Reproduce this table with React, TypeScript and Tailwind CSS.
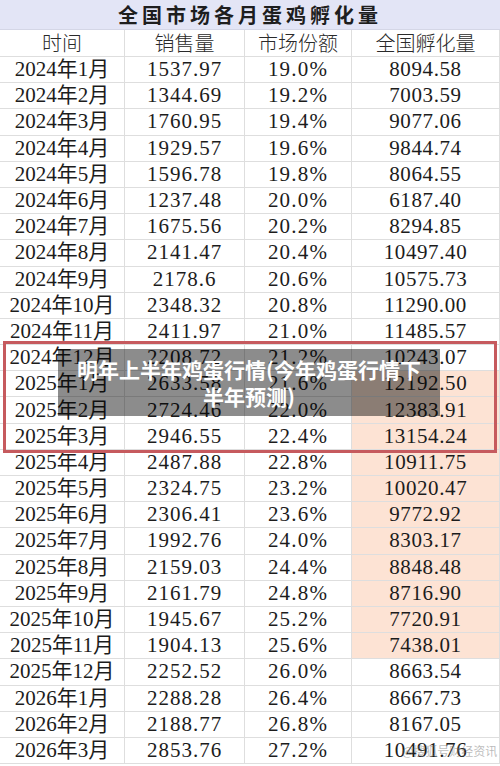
import React from "react";

const rows: [string, string, string, string][] = [
  ["2024年1月", "1537.97", "19.0%", "8094.58"],
  ["2024年2月", "1344.69", "19.2%", "7003.59"],
  ["2024年3月", "1760.95", "19.4%", "9077.06"],
  ["2024年4月", "1929.57", "19.6%", "9844.74"],
  ["2024年5月", "1596.78", "19.8%", "8064.55"],
  ["2024年6月", "1237.48", "20.0%", "6187.40"],
  ["2024年7月", "1675.56", "20.2%", "8294.85"],
  ["2024年8月", "2141.47", "20.4%", "10497.40"],
  ["2024年9月", "2178.6", "20.6%", "10575.73"],
  ["2024年10月", "2348.32", "20.8%", "11290.00"],
  ["2024年11月", "2411.97", "21.0%", "11485.57"],
  ["2024年12月", "2208.72", "21.2%", "10243.07"],
  ["2025年1月", "2633.58", "21.6%", "12192.50"],
  ["2025年2月", "2724.46", "22.0%", "12383.91"],
  ["2025年3月", "2946.55", "22.4%", "13154.24"],
  ["2025年4月", "2487.88", "22.8%", "10911.75"],
  ["2025年5月", "2324.75", "23.2%", "10020.47"],
  ["2025年6月", "2306.41", "23.6%", "9772.92"],
  ["2025年7月", "1992.76", "24.0%", "8303.17"],
  ["2025年8月", "2159.03", "24.4%", "8848.48"],
  ["2025年9月", "2161.79", "24.8%", "8716.90"],
  ["2025年10月", "1945.67", "25.2%", "7720.91"],
  ["2025年11月", "1904.13", "25.6%", "7438.01"],
  ["2025年12月", "2252.52", "26.0%", "8663.54"],
  ["2026年1月", "2288.28", "26.4%", "8667.73"],
  ["2026年2月", "2188.77", "26.8%", "8167.05"],
  ["2026年3月", "2853.76", "27.2%", "10491.76"],
];

const cell =
  "flex h-[26.2px] items-center justify-center border-b border-r border-[#dedede] text-[21px] leading-none text-[#1c1c1c]";

export default function App() {
  return (
    <div
      className="relative w-[500px] h-[766px] overflow-hidden bg-white"
      style={{ fontFamily: '"Liberation Serif", "Noto Sans CJK SC", serif' }}
    >
      <div className="flex h-[30px] items-center justify-center bg-[#e3e5f6] border-b border-[#d4d6e6]">
        <span
          className="text-[20px] font-bold tracking-[4px] text-[#1e1e1e]"
          style={{ fontFamily: '"Noto Sans CJK SC", sans-serif' }}
        >
          全国市场各月蛋鸡孵化量
        </span>
      </div>
      <div className="grid grid-cols-[125px_120px_107px_148px]">
        {["时间", "销售量", "市场份额", "全国孵化量"].map((h) => (
          <div
            key={h}
            className="flex h-[27px] items-center justify-center border-b border-r border-[#dedede] text-[20px] text-[#2a2a2a]"
            style={{ fontFamily: '"Noto Sans CJK SC", sans-serif', fontWeight: 300 }}
          >
            {h}
          </div>
        ))}
        {rows.map((r, i) => {
          const peach = i >= 12 && i <= 22;
          return (
            <React.Fragment key={r[0]}>
              <div className={cell}>{r[0]}</div>
              <div className={`${cell} tracking-[1px]`}>{r[1]}</div>
              <div className={`${cell} tracking-[1.2px]`}>{r[2]}</div>
              <div className={`${cell} tracking-[0.6px] ${peach ? "bg-[#fde3d4]" : ""}`}>{r[3]}</div>
            </React.Fragment>
          );
        })}
      </div>

      {/* red highlight box */}
      <div className="pointer-events-none absolute left-[3px] top-[341px] h-[112px] w-[494px] border-[3px] border-[#c65a5e]" />

      {/* caption overlay */}
      <div className="absolute left-[58px] top-[349px] flex h-[67px] w-[382px] items-center justify-center bg-[rgba(0,0,0,0.45)] px-[4px]">
        <p
          className="text-center text-[21px] font-bold leading-[27px] text-white"
          style={{ fontFamily: '"Noto Sans CJK SC", sans-serif' }}
        >
          明年上半年鸡蛋行情(今年鸡蛋行情下
          <br />
          半年预测)
        </p>
      </div>

      {/* watermark */}
      <div
        className="absolute left-[402px] top-[743px] text-[12px] leading-[16px] text-[rgba(120,120,120,0.5)]"
        style={{ fontFamily: '"Noto Sans CJK SC", sans-serif' }}
      >
        @搜狐号财经资讯
      </div>
    </div>
  );
}
